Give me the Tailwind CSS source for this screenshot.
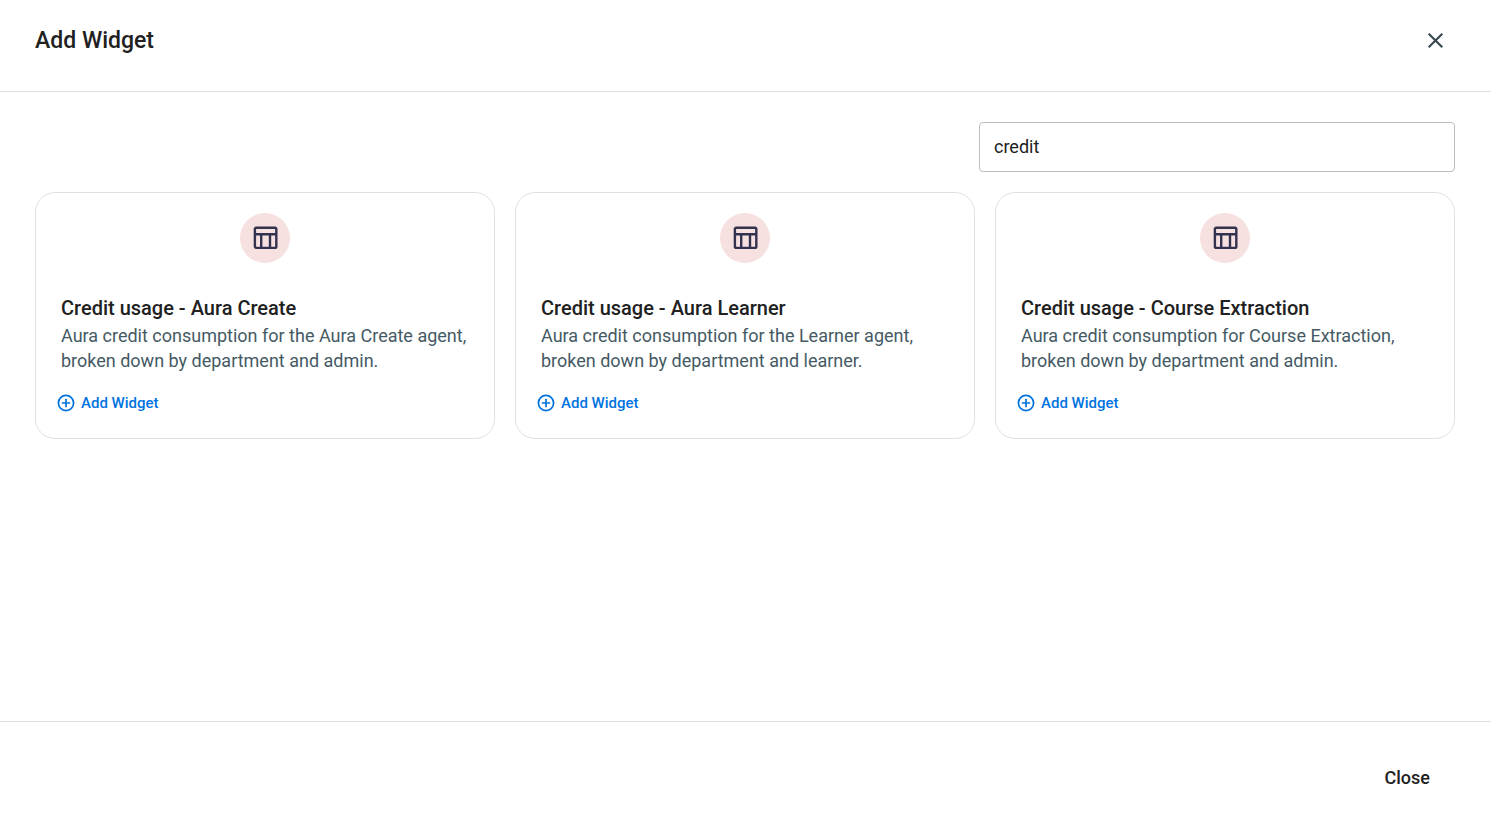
<!DOCTYPE html>
<html lang="en">
<head>
  <meta charset="UTF-8">
  <meta name="viewport" content="width=device-width, initial-scale=1.0">
  <title>Add Widget</title>
  <script src="https://cdn.jsdelivr.net/npm/@tailwindcss/browser@4"></script>
</head>
<body class="bg-white font-[Roboto,sans-serif] text-[#212121]">
  <div role="dialog" aria-labelledby="dialogTitle" class="flex min-h-screen flex-col">
    <!-- Header -->
    <header class="flex items-center justify-between border-b border-[#e0e0e0] pt-5 pr-[35px] pb-[29px] pl-[35px]">
      <h1 id="dialogTitle" class="text-[23px] leading-10 font-medium">Add Widget</h1>
      <button type="button" aria-label="Close dialog" class="flex size-[42px] items-center justify-center text-[#37474f]">
        <svg class="size-[18px]" viewBox="0 0 18 18" fill="none" stroke="currentColor" stroke-width="2.1">
          <path d="M2.7 1.7 16.3 15.3M16.3 1.7 2.7 15.3"/>
        </svg>
      </button>
    </header>

    <!-- Widget list -->
    <main class="flex-1 pt-[30px] pr-9 pb-[30px] pl-[35px]">
      <div class="mb-5 flex justify-end">
        <input type="text" id="widgetSearch" aria-label="Search widgets" value="credit" class="h-[50px] w-[476px] max-w-full rounded border border-[#bdbdbd] px-3.5 pb-0.5 text-lg">
      </div>

      <div class="grid grid-cols-1 gap-5 md:grid-cols-3">
        <article class="flex flex-col rounded-[20px] border border-[#e0e0e0] px-[25px] pt-5 pb-[25px]">
          <div class="mb-[30px] flex size-[50px] items-center justify-center self-center rounded-full bg-[#f6e0e0] text-[#33334f]">
            <svg class="size-[26px]" viewBox="0 0 26 26" fill="none" stroke="currentColor" stroke-width="2.4">
              <rect x="2.9" y="2.7" width="21.4" height="20.2" rx="1.4"/>
              <path d="M2.9 9.3h21.4M9.2 9.3v13.6M18 9.3v13.6"/>
            </svg>
          </div>
          <h2 class="text-xl leading-[30px] font-medium">Credit usage - Aura Create</h2>
          <p class="text-lg leading-[25px] text-[#455a64]">Aura credit consumption for the Aura Create agent, broken down by department and admin.</p>
          <button type="button" class="mt-5 -ml-1 flex items-center gap-1.5 self-start text-[15px] leading-5 font-medium text-[#0073e0]">
            <svg class="size-[18px]" viewBox="0 0 18 18" fill="none" stroke="currentColor" stroke-width="1.7">
              <circle cx="9" cy="9" r="7.6"/>
              <path d="M9 4.8v8.4M4.8 9h8.4"/>
            </svg>
            Add Widget
          </button>
        </article>

        <article class="flex flex-col rounded-[20px] border border-[#e0e0e0] px-[25px] pt-5 pb-[25px]">
          <div class="mb-[30px] flex size-[50px] items-center justify-center self-center rounded-full bg-[#f6e0e0] text-[#33334f]">
            <svg class="size-[26px]" viewBox="0 0 26 26" fill="none" stroke="currentColor" stroke-width="2.4">
              <rect x="2.9" y="2.7" width="21.4" height="20.2" rx="1.4"/>
              <path d="M2.9 9.3h21.4M9.2 9.3v13.6M18 9.3v13.6"/>
            </svg>
          </div>
          <h2 class="text-xl leading-[30px] font-medium">Credit usage - Aura Learner</h2>
          <p class="text-lg leading-[25px] text-[#455a64]">Aura credit consumption for the Learner agent, broken down by department and learner.</p>
          <button type="button" class="mt-5 -ml-1 flex items-center gap-1.5 self-start text-[15px] leading-5 font-medium text-[#0073e0]">
            <svg class="size-[18px]" viewBox="0 0 18 18" fill="none" stroke="currentColor" stroke-width="1.7">
              <circle cx="9" cy="9" r="7.6"/>
              <path d="M9 4.8v8.4M4.8 9h8.4"/>
            </svg>
            Add Widget
          </button>
        </article>

        <article class="flex flex-col rounded-[20px] border border-[#e0e0e0] px-[25px] pt-5 pb-[25px]">
          <div class="mb-[30px] flex size-[50px] items-center justify-center self-center rounded-full bg-[#f6e0e0] text-[#33334f]">
            <svg class="size-[26px]" viewBox="0 0 26 26" fill="none" stroke="currentColor" stroke-width="2.4">
              <rect x="2.9" y="2.7" width="21.4" height="20.2" rx="1.4"/>
              <path d="M2.9 9.3h21.4M9.2 9.3v13.6M18 9.3v13.6"/>
            </svg>
          </div>
          <h2 class="text-xl leading-[30px] font-medium">Credit usage - Course Extraction</h2>
          <p class="text-lg leading-[25px] text-[#455a64]">Aura credit consumption for Course Extraction, broken down by department and admin.</p>
          <button type="button" class="mt-5 -ml-1 flex items-center gap-1.5 self-start text-[15px] leading-5 font-medium text-[#0073e0]">
            <svg class="size-[18px]" viewBox="0 0 18 18" fill="none" stroke="currentColor" stroke-width="1.7">
              <circle cx="9" cy="9" r="7.6"/>
              <path d="M9 4.8v8.4M4.8 9h8.4"/>
            </svg>
            Add Widget
          </button>
        </article>
      </div>
    </main>

    <!-- Footer -->
    <footer class="flex justify-end border-t border-[#e0e0e0] px-9 pt-[31px] pb-[15px]">
      <button type="button" class="h-[50px] px-[25px] text-lg font-medium">Close</button>
    </footer>
  </div>
</body>
</html>
